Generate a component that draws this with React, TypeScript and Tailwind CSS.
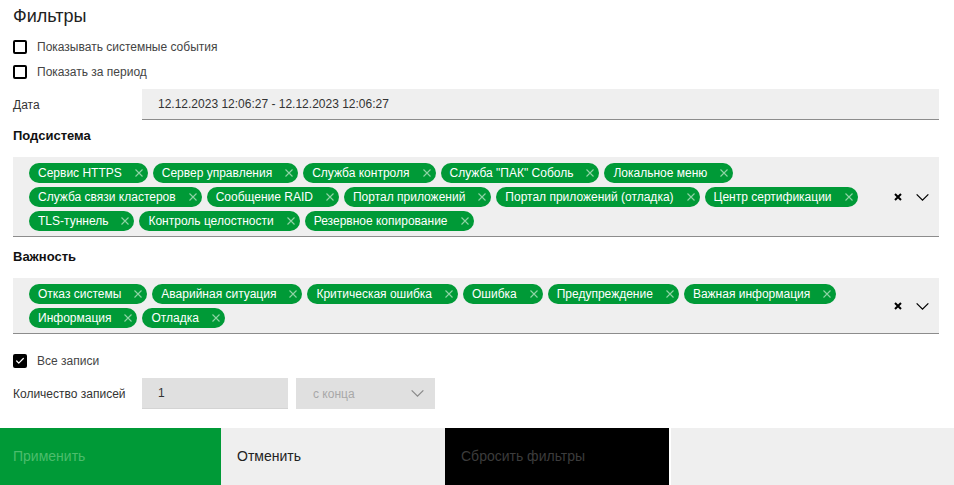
import { Check } from "lucide-react";

const SUBSYSTEMS = [
  "Сервис HTTPS",
  "Сервер управления",
  "Служба контроля",
  'Служба "ПАК" Соболь',
  "Локальное меню",
  "Служба связи кластеров",
  "Сообщение RAID",
  "Портал приложений",
  "Портал приложений (отладка)",
  "Центр сертификации",
  "TLS-туннель",
  "Контроль целостности",
  "Резервное копирование",
];

const SEVERITIES = [
  "Отказ системы",
  "Аварийная ситуация",
  "Критическая ошибка",
  "Ошибка",
  "Предупреждение",
  "Важная информация",
  "Информация",
  "Отладка",
];

function Checkbox({ label, checked = false }: { label: string; checked?: boolean }) {
  return (
    <label className="flex h-[14px] items-center gap-[10px]">
      <span
        className={`flex h-[14px] w-[14px] shrink-0 items-center justify-center rounded-[2px] ${
          checked ? "bg-black" : "border-2 border-black bg-white"
        }`}
      >
        {checked && <Check className="h-[10px] w-[10px] text-white" strokeWidth={3} />}
      </span>
      <span className="text-[12px] text-[#444]">{label}</span>
    </label>
  );
}

function Chevron({ className = "" }: { className?: string }) {
  return (
    <svg viewBox="0 0 16 10" className={className} fill="none" stroke="currentColor" strokeWidth="1.4">
      <path d="M1.5 1.5 8 8l6.5-6.5" />
    </svg>
  );
}

function Tag({ label }: { label: string }) {
  return (
    <span className="flex h-5 items-center rounded-full bg-[#009a37] pl-[9px] pr-[5px] text-[12px] leading-5 text-white">
      {label}
      <svg viewBox="0 0 8 8" className="ml-[13px] h-2 w-2 text-[#8fd4a6]" stroke="currentColor" strokeWidth="1.1">
        <path d="M0.5 0.5 7.5 7.5M7.5 0.5 0.5 7.5" />
      </svg>
    </span>
  );
}

function MultiSelect({ items }: { items: string[] }) {
  return (
    <div className="flex items-center border-b border-[#8c8c8c] bg-[#efefef] pb-[5px] pl-4 pt-[6px]">
      <div className="flex w-[852px] flex-wrap gap-x-[5px] gap-y-1">
        {items.map((item) => (
          <Tag key={item} label={item} />
        ))}
      </div>
      <div className="ml-auto flex items-center gap-[13px] pr-[9px]">
        <svg viewBox="0 0 8 8" className="h-2 w-2 text-black" stroke="currentColor" strokeWidth="2">
          <path d="M1 1 7 7M7 1 1 7" />
        </svg>
        <Chevron className="h-[9px] w-[15px] text-black" />
      </div>
    </div>
  );
}

export default function App() {
  return (
    <div className="h-[485px] w-[954px] overflow-hidden bg-white font-['Liberation_Sans',Arial,sans-serif] text-[#333]">
      <div className="pl-[13px] pr-[15px]">
        <h2 className="pt-[5px] text-[18px] leading-[22px] text-[#222]">Фильтры</h2>

        <div className="mt-[13px]">
          <Checkbox label="Показывать системные события" />
        </div>
        <div className="mt-[11px]">
          <Checkbox label="Показать за период" />
        </div>

        <div className="mt-[10px] flex h-[31px] items-center">
          <span className="w-[129px] text-[12px]">Дата</span>
          <div className="flex h-full flex-1 items-center border-b border-[#8c8c8c] bg-[#efefef] pl-4 text-[12px]">
            12.12.2023 12:06:27 - 12.12.2023 12:06:27
          </div>
        </div>

        <h3 className="mt-2 text-[13px] font-bold leading-4 text-[#111]">Подсистема</h3>
        <div className="mt-[13px]">
          <MultiSelect items={SUBSYSTEMS} />
        </div>

        <h3 className="mt-3 text-[13px] font-bold leading-4 text-[#111]">Важность</h3>
        <div className="mt-[13px]">
          <MultiSelect items={SEVERITIES} />
        </div>

        <div className="mt-5">
          <Checkbox label="Все записи" checked />
        </div>

        <div className="mt-[10px] flex h-[31px] items-center">
          <span className="w-[129px] text-[12px]">Количество записей</span>
          <div className="flex h-full w-[146px] items-center border-b border-[#d4d4d4] bg-[#e0e0e0] pl-4 text-[12px]">
            1
          </div>
          <div className="ml-2 flex h-full w-[139px] items-center justify-between bg-[#e0e0e0] pl-[17px] pr-[10px] text-[12px] text-[#a8a8a8]">
            с конца
            <Chevron className="h-[9px] w-[15px] text-[#8a8a8a]" />
          </div>
        </div>
      </div>

      <div className="mt-[19px] flex h-[57px] text-[14px]">
        <button className="w-[221px] bg-[#009a37] pl-[13px] text-left text-[#4cbd6c]">Применить</button>
        <button className="w-[224px] bg-[#efefef] pl-4 text-left text-[#222]">Отменить</button>
        <button className="w-[224px] bg-black pl-4 text-left text-[#3c3c3c]">Сбросить фильтры</button>
        <div className="ml-[2px] flex-1 bg-[#efefef]" />
      </div>
    </div>
  );
}
